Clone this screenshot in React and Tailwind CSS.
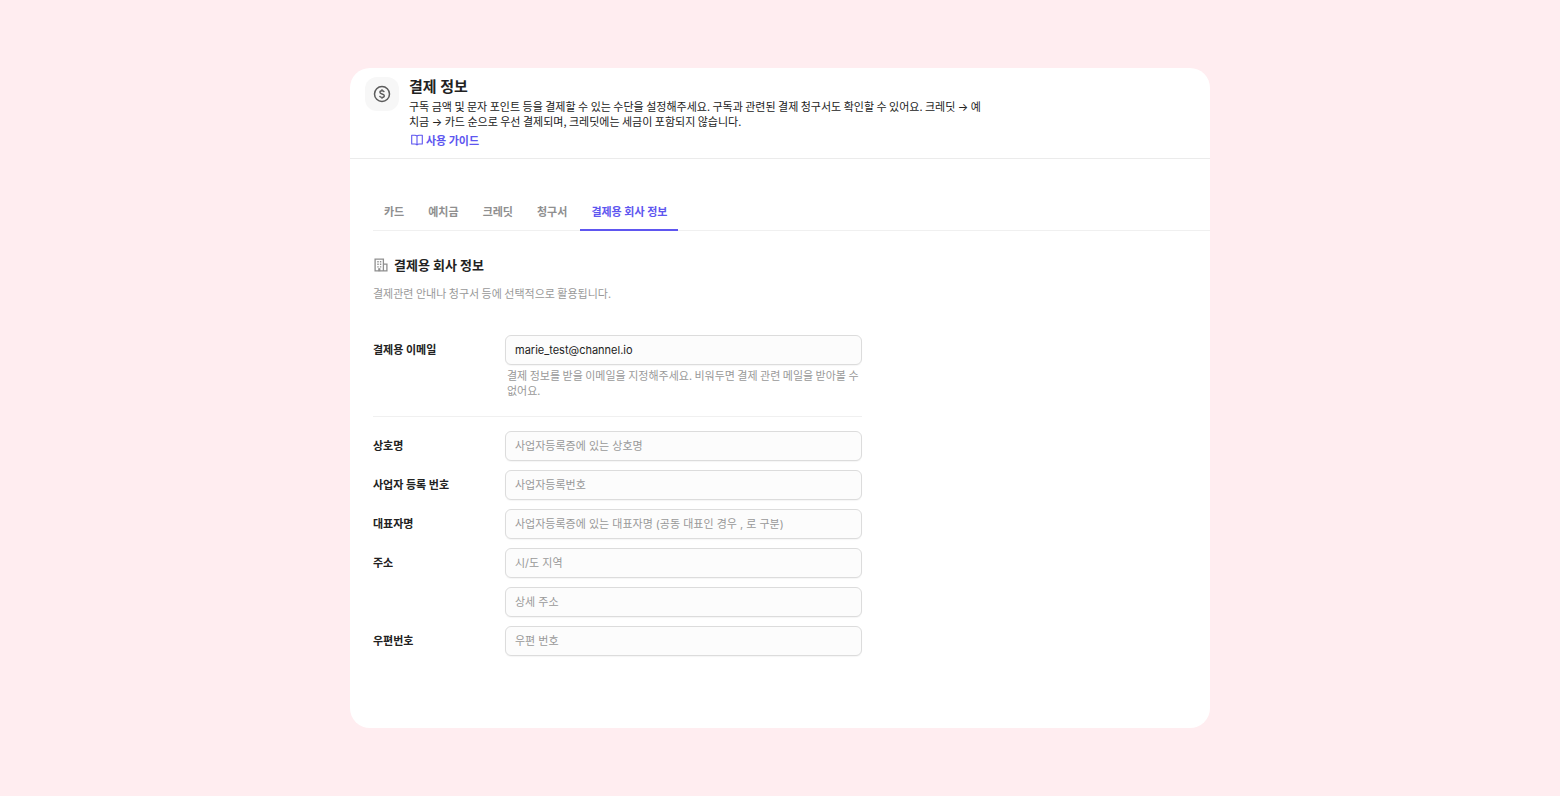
import { useState } from 'react';

const fontStack = "font-[Inter,'Noto_Sans_CJK_KR',sans-serif]";
const denseFontStack = "font-['Noto_Sans_CJK_KR',sans-serif]";

const tabs = ['카드', '예치금', '크레딧', '청구서', '결제용 회사 정보'];

const fields = [
  { id: 'company', label: '상호명', placeholder: '사업자등록증에 있는 상호명' },
  { id: 'number', label: '사업자 등록 번호', placeholder: '사업자등록번호' },
  { id: 'owner', label: '대표자명', placeholder: '사업자등록증에 있는 대표자명 (공동 대표인 경우 , 로 구분)' },
  { id: 'address', label: '주소', placeholder: '시/도 지역' },
  { id: 'detail', label: '', ariaLabel: '상세 주소', placeholder: '상세 주소' },
  { id: 'zip', label: '우편번호', placeholder: '우편 번호' },
];

function DollarIcon() {
  return (
    <svg className="size-[18px]" viewBox="0 0 18 18" fill="none" stroke="#5c5c5c" aria-hidden="true">
      <circle cx="9" cy="9" r="7.5" strokeWidth="1.5" />
      <path d="M11.2 7.1c-.2-.9-1-1.4-2.2-1.4s-2.1.5-2.1 1.5c0 2.4 4.4 1.1 4.4 3.6 0 1-.9 1.6-2.3 1.6s-2.2-.6-2.4-1.6M9 4.2v1.5M9 12.3v1.5" strokeWidth="1.4" />
    </svg>
  );
}

function BookIcon() {
  return (
    <svg className="h-3 w-3" viewBox="0 0 12 12" fill="none" stroke="currentColor" strokeWidth="1.1" strokeLinejoin="round" aria-hidden="true">
      <path d="M6 2.2C5.6 1.5 4.8 1.3 3.9 1.3H.7v8.7h3.2c.9 0 1.7.2 2.1.9.4-.7 1.2-.9 2.1-.9h3.2V1.3H8.1C7.2 1.3 6.4 1.5 6 2.2v8.7" />
    </svg>
  );
}

function BuildingIcon() {
  return (
    <svg className="size-4" viewBox="0 0 16 16" fill="none" stroke="#8f8f8f" aria-hidden="true">
      <path d="M2.1 14.4V2.1h8.3v12.3M10.4 7.2h3.5v7.2M1.5 13.9h13" strokeWidth="1.3" />
      <path d="M4.3 4.7h1.4M6.9 4.7h1.4M4.3 7.3h1.4M6.9 7.3h1.4M4.3 9.9h1.4M6.9 9.9h1.4" strokeWidth="1.4" />
      <path d="M6.3 11.2v3" strokeWidth="2.2" />
    </svg>
  );
}

function Arrow() {
  return <span className="font-[Inter,sans-serif] leading-none">→</span>;
}

function TextField({ className = '', ...props }) {
  return (
    <input
      {...props}
      className={`h-[30px] w-full rounded-md border border-[#dcdcdc] bg-[#fcfcfc] px-[9px] text-[#222] shadow-[0_1px_1px_rgba(0,0,0,0.04)] outline-none placeholder:text-[#999] placeholder:opacity-100 focus:border-[#5e56f0] ${className}`}
    />
  );
}

export default function App() {
  const [active, setActive] = useState(4);
  const [email, setEmail] = useState('marie_test@channel.io');

  return (
    <div className={`flex min-h-screen items-center justify-center bg-[#ffedf0] text-[#222] ${fontStack}`}>
      <main className="min-h-[660px] w-full max-w-[860px] rounded-[20px] bg-white">
        <header className="flex gap-[10px] border-b border-[#ebebeb] pt-2 pb-[10px] pl-[15px]">
          <div className="mt-px flex size-[34px] shrink-0 items-center justify-center rounded-xl bg-[#f7f7f7]">
            <DollarIcon />
          </div>
          <div className="max-w-[580px]">
            <h1 className="text-[15px] leading-[22px] font-bold">결제 정보</h1>
            <p className={`mt-px text-[11px] leading-[15px] break-all ${denseFontStack}`}>
              구독 금액 및 문자 포인트 등을 결제할 수 있는 수단을 설정해주세요. 구독과 관련된 결제 청구서도 확인할 수 있어요. 크레딧 <Arrow /> 예치금 <Arrow /> 카드 순으로 우선 결제되며, 크레딧에는 세금이 포함되지 않습니다.
            </p>
            <a href="#guide" className={`mt-[3px] ml-0.5 flex w-fit items-center gap-[3px] text-[11px] leading-4 font-bold text-[#5e56f0] ${denseFontStack}`}>
              <BookIcon />
              사용 가이드
            </a>
          </div>
        </header>

        <nav role="tablist" className="mt-9 ml-[23px] flex gap-0.5 border-b border-[#f0f0f0] text-[11px] font-bold">
          {tabs.map((tab, i) => (
            <button
              key={tab}
              type="button"
              role="tab"
              aria-selected={i === active}
              onClick={() => setActive(i)}
              className={`-mb-px h-9 border-b-2 px-[11px] ${i === active ? 'border-[#5e56f0] text-[#5e56f0]' : 'border-transparent text-[#8f8f8f]'}`}
            >
              {tab}
            </button>
          ))}
        </nav>

        <section className="px-[23px] pt-6 text-[11px]">
          <h2 className="flex items-center gap-[5px] text-[13px] leading-5 font-bold">
            <BuildingIcon />
            결제용 회사 정보
          </h2>
          <p className={`mt-[10px] leading-4 text-[#999] ${denseFontStack}`}>결제관련 안내나 청구서 등에 선택적으로 활용됩니다.</p>

          <form className="mt-[34px] max-w-[489px]" onSubmit={(e) => e.preventDefault()}>
            <div className="flex border-b border-[#f0f0f0] pb-[18px]">
              <label htmlFor="email" className="w-[132px] shrink-0 leading-[30px] font-bold">결제용 이메일</label>
              <div className="min-w-0 flex-1">
                <TextField id="email" type="email" value={email} onChange={(e) => setEmail(e.target.value)} />
                <p className={`mt-[3px] px-0.5 leading-[15px] text-[#999] ${denseFontStack}`}>
                  결제 정보를 받을 이메일을 지정해주세요. 비워두면 결제 관련 메일을 받아볼 수 없어요.
                </p>
              </div>
            </div>
            <div className="mt-[14px] flex flex-col gap-[9px]">
              {fields.map((f) => (
                <div key={f.id} className="flex">
                  <label htmlFor={f.id} className="w-[132px] shrink-0 leading-[30px] font-bold">{f.label}</label>
                  <TextField id={f.id} type="text" placeholder={f.placeholder} aria-label={f.ariaLabel} />
                </div>
              ))}
            </div>
          </form>
        </section>
      </main>
    </div>
  );
}
